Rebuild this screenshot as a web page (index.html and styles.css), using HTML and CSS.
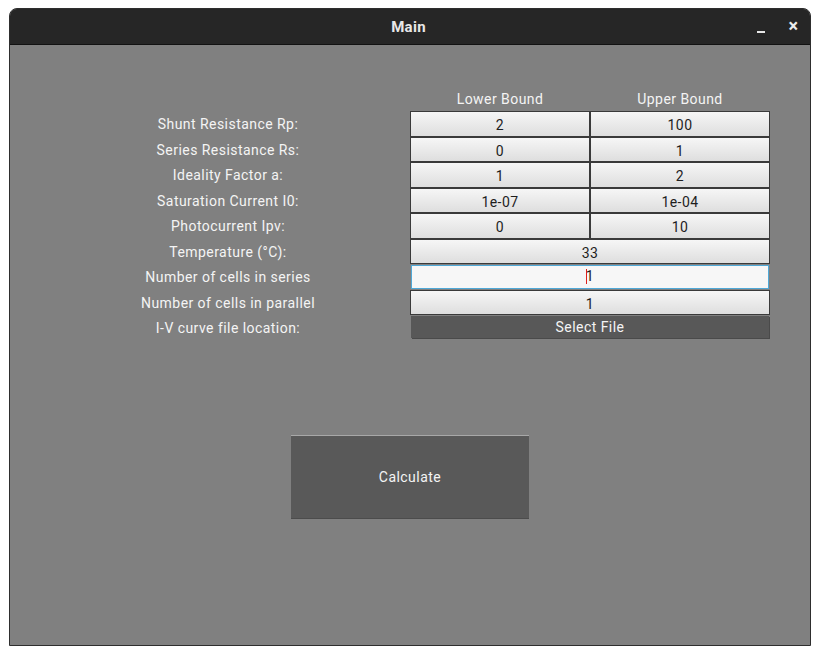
FILE: index.html
```html
<!DOCTYPE html>
<html>
<head>
<meta charset="utf-8">
<link rel="stylesheet" href="styles.css">
</head>
<body>
<div class="window">
  <div class="titlebar">
    <span class="title">Main</span>
    <span class="controls"><span class="min"></span><span class="close">×</span></span>
  </div>
  <div class="content">
    <div class="grid">
      <div class="label"></div>
      <div class="head">Lower Bound</div>
      <div class="head">Upper Bound</div>

      <div class="label">Shunt Resistance Rp:</div>
      <div class="field">2</div>
      <div class="field">100</div>

      <div class="label">Series Resistance Rs:</div>
      <div class="field">0</div>
      <div class="field">1</div>

      <div class="label">Ideality Factor a:</div>
      <div class="field">1</div>
      <div class="field">2</div>

      <div class="label">Saturation Current I0:</div>
      <div class="field">1e-07</div>
      <div class="field">1e-04</div>

      <div class="label">Photocurrent Ipv:</div>
      <div class="field">0</div>
      <div class="field">10</div>

      <div class="label">Temperature (°C):</div>
      <div class="field span">33</div>

      <div class="label">Number of cells in series</div>
      <div class="field span focus"><span class="caret"></span>1</div>

      <div class="label">Number of cells in parallel</div>
      <div class="field span">1</div>

      <div class="label">I-V curve file location:</div>
      <div class="select span">Select File</div>
    </div>
    <div class="calc-wrap">
      <div class="calc">Calculate</div>
    </div>
  </div>
</div>
</body>
</html>
```
FILE: styles.css
```css
html, body {
  margin: 0;
  padding: 0;
  background: #ffffff;
  font-family: Roboto, "Liberation Sans", sans-serif;
}
.window {
  margin: 8px 0 0 9px;
  width: 802px;
  height: 638px;
  box-sizing: border-box;
  border: 1px solid #2e2e2e;
  border-radius: 8px 8px 0 0;
  background: #808080;
  overflow: hidden;
  display: flex;
  flex-direction: column;
}
.titlebar {
  height: 35px;
  flex: none;
  background: #262626;
  border-bottom: 1px solid #121212;
  display: flex;
  align-items: center;
  justify-content: center;
  position: relative;
}
.title {
  color: #e8e8e8;
  font-weight: bold;
  font-size: 15px;
  letter-spacing: 0.3px;
  margin-top: 1px;
  margin-left: -3px;
}
.controls {
  position: absolute;
  right: 12px;
  top: 0;
  height: 35px;
  display: flex;
  align-items: center;
  gap: 23px;
}
.min {
  width: 8px;
  height: 2px;
  background: #e6e6e6;
  margin-top: 10px;
}
.close {
  color: #ececec;
  font-size: 18px;
  font-weight: bold;
  line-height: 1;
  margin-top: -1px;
}
.content {
  flex: 1;
  padding-top: 42px;
}
.grid {
  display: grid;
  grid-template-columns: 282px 180px 180px;
  grid-auto-rows: 25.5px;
  grid-template-rows: 24px;
  margin-left: 118px;
  letter-spacing: 0.45px;
}
.label {
  padding-right: 82px;
  padding-top: 1px;
  text-align: center;
  color: #f4f4f4;
  font-size: 14px;
  line-height: 25.5px;
  white-space: nowrap;
}
.head {
  text-align: center;
  color: #f4f4f4;
  font-size: 14px;
  line-height: 24px;
}
.field {
  box-sizing: border-box;
  border: 1px solid #3a3a3a;
  background: linear-gradient(#f6f6f6, #dedede);
  color: #1e1e1e;
  font-size: 14px;
  text-align: center;
  line-height: 24px;
  padding-top: 1px;
}
.span {
  grid-column: 2 / span 2;
}
.field.focus {
  margin: 1px;
  border: 1px solid #4fa9d8;
  background: #f7f7f7;
  line-height: 21px;
  padding-top: 0;
}
.caret {
  display: inline-block;
  width: 1px;
  height: 15px;
  background: #e0201c;
  vertical-align: -3px;
  margin-right: -1px;
}
.select {
  margin: 1px 1px 0 1px;
  background: #585858;
  color: #f4f4f4;
  font-size: 14px;
  text-align: center;
  line-height: 22px;
  height: 22px;
  box-shadow: 1px 1px 0 #4a4a4a;
}
.calc-wrap {
  display: flex;
  justify-content: center;
  margin-top: 94px;
}
.calc {
  width: 238px;
  height: 82px;
  background: #595959;
  border-top: 1px solid #a8a8a8;
  box-shadow: 0 1px 0 #4c4c4c;
  color: #f4f4f4;
  font-size: 14px;
  letter-spacing: 0.45px;
  display: flex;
  align-items: center;
  justify-content: center;
}
```
